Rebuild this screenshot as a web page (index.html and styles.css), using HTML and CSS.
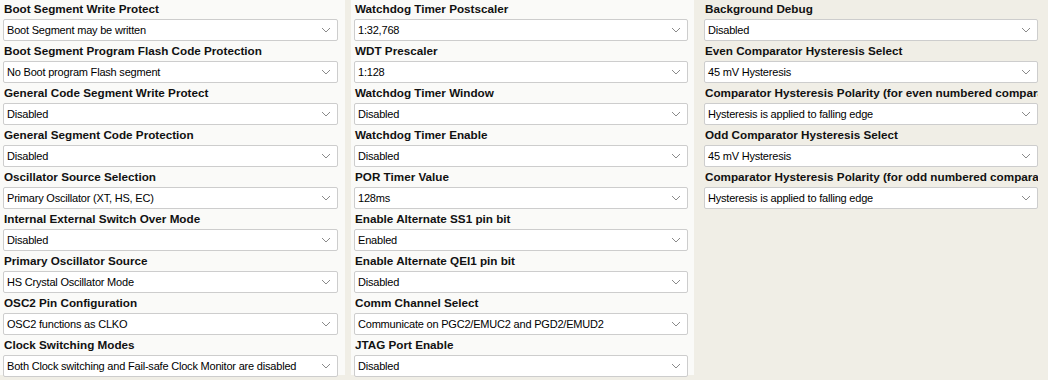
FILE: index.html
```html
<!DOCTYPE html>
<html lang="en">
<head>
  <meta charset="UTF-8" />
  <title>Configuration Bits</title>
  <link rel="stylesheet" href="styles.css">
</head>
<body>
  <div class="panel">

    <!-- column 1 -->
    <div class="col col-first">
      <div class="field">
        <div class="field-label">Boot Segment Write Protect</div>
        <div class="select"><span>Boot Segment may be written</span><svg class="chev" viewBox="0 0 10 6"><path d="M1 1l4 4 4-4"/></svg></div>
      </div>
      <div class="field">
        <div class="field-label">Boot Segment Program Flash Code Protection</div>
        <div class="select"><span>No Boot program Flash segment</span><svg class="chev" viewBox="0 0 10 6"><path d="M1 1l4 4 4-4"/></svg></div>
      </div>
      <div class="field">
        <div class="field-label">General Code Segment Write Protect</div>
        <div class="select"><span>Disabled</span><svg class="chev" viewBox="0 0 10 6"><path d="M1 1l4 4 4-4"/></svg></div>
      </div>
      <div class="field">
        <div class="field-label">General Segment Code Protection</div>
        <div class="select"><span>Disabled</span><svg class="chev" viewBox="0 0 10 6"><path d="M1 1l4 4 4-4"/></svg></div>
      </div>
      <div class="field">
        <div class="field-label">Oscillator Source Selection</div>
        <div class="select"><span>Primary Oscillator (XT, HS, EC)</span><svg class="chev" viewBox="0 0 10 6"><path d="M1 1l4 4 4-4"/></svg></div>
      </div>
      <div class="field">
        <div class="field-label">Internal External Switch Over Mode</div>
        <div class="select"><span>Disabled</span><svg class="chev" viewBox="0 0 10 6"><path d="M1 1l4 4 4-4"/></svg></div>
      </div>
      <div class="field">
        <div class="field-label">Primary Oscillator Source</div>
        <div class="select"><span>HS Crystal Oscillator Mode</span><svg class="chev" viewBox="0 0 10 6"><path d="M1 1l4 4 4-4"/></svg></div>
      </div>
      <div class="field">
        <div class="field-label">OSC2 Pin Configuration</div>
        <div class="select"><span>OSC2 functions as CLKO</span><svg class="chev" viewBox="0 0 10 6"><path d="M1 1l4 4 4-4"/></svg></div>
      </div>
      <div class="field">
        <div class="field-label">Clock Switching Modes</div>
        <div class="select"><span>Both Clock switching and Fail-safe Clock Monitor are disabled</span><svg class="chev" viewBox="0 0 10 6"><path d="M1 1l4 4 4-4"/></svg></div>
      </div>
    </div>

    <!-- column 2 -->
    <div class="col col-mid">
      <div class="field">
        <div class="field-label">Watchdog Timer Postscaler</div>
        <div class="select"><span>1:32,768</span><svg class="chev" viewBox="0 0 10 6"><path d="M1 1l4 4 4-4"/></svg></div>
      </div>
      <div class="field">
        <div class="field-label">WDT Prescaler</div>
        <div class="select"><span>1:128</span><svg class="chev" viewBox="0 0 10 6"><path d="M1 1l4 4 4-4"/></svg></div>
      </div>
      <div class="field">
        <div class="field-label">Watchdog Timer Window</div>
        <div class="select"><span>Disabled</span><svg class="chev" viewBox="0 0 10 6"><path d="M1 1l4 4 4-4"/></svg></div>
      </div>
      <div class="field">
        <div class="field-label">Watchdog Timer Enable</div>
        <div class="select"><span>Disabled</span><svg class="chev" viewBox="0 0 10 6"><path d="M1 1l4 4 4-4"/></svg></div>
      </div>
      <div class="field">
        <div class="field-label">POR Timer Value</div>
        <div class="select"><span>128ms</span><svg class="chev" viewBox="0 0 10 6"><path d="M1 1l4 4 4-4"/></svg></div>
      </div>
      <div class="field">
        <div class="field-label">Enable Alternate SS1 pin bit</div>
        <div class="select"><span>Enabled</span><svg class="chev" viewBox="0 0 10 6"><path d="M1 1l4 4 4-4"/></svg></div>
      </div>
      <div class="field">
        <div class="field-label">Enable Alternate QEI1 pin bit</div>
        <div class="select"><span>Disabled</span><svg class="chev" viewBox="0 0 10 6"><path d="M1 1l4 4 4-4"/></svg></div>
      </div>
      <div class="field">
        <div class="field-label">Comm Channel Select</div>
        <div class="select"><span>Communicate on PGC2/EMUC2 and PGD2/EMUD2</span><svg class="chev" viewBox="0 0 10 6"><path d="M1 1l4 4 4-4"/></svg></div>
      </div>
      <div class="field">
        <div class="field-label">JTAG Port Enable</div>
        <div class="select"><span>Disabled</span><svg class="chev" viewBox="0 0 10 6"><path d="M1 1l4 4 4-4"/></svg></div>
      </div>
    </div>

    <!-- column 3 -->
    <div class="col col-last">
      <div class="field">
        <div class="field-label">Background Debug</div>
        <div class="select"><span>Disabled</span><svg class="chev" viewBox="0 0 10 6"><path d="M1 1l4 4 4-4"/></svg></div>
      </div>
      <div class="field">
        <div class="field-label">Even Comparator Hysteresis Select</div>
        <div class="select"><span>45 mV Hysteresis</span><svg class="chev" viewBox="0 0 10 6"><path d="M1 1l4 4 4-4"/></svg></div>
      </div>
      <div class="field">
        <div class="field-label">Comparator Hysteresis Polarity (for even numbered comparators)</div>
        <div class="select"><span>Hysteresis is applied to falling edge</span><svg class="chev" viewBox="0 0 10 6"><path d="M1 1l4 4 4-4"/></svg></div>
      </div>
      <div class="field">
        <div class="field-label">Odd Comparator Hysteresis Select</div>
        <div class="select"><span>45 mV Hysteresis</span><svg class="chev" viewBox="0 0 10 6"><path d="M1 1l4 4 4-4"/></svg></div>
      </div>
      <div class="field">
        <div class="field-label">Comparator Hysteresis Polarity (for odd numbered comparators)</div>
        <div class="select"><span>Hysteresis is applied to falling edge</span><svg class="chev" viewBox="0 0 10 6"><path d="M1 1l4 4 4-4"/></svg></div>
      </div>
    </div>

  </div>
</body>
</html>
```

FILE: styles.css
```css
/* page */
* {
  box-sizing: border-box;
}
body {
  margin: 0;
  background: #f0eee6;
  font-family: "Liberation Sans", Arial, sans-serif;
  color: #000;
}

.panel {
  display: flex;
  height: 380px;
}

/* columns */
.col {
  flex: none;
}
.col-first {
  width: 345px;
  padding: 0 7px 0 3px;
  background: #fafaf8;
  height: 375px;
}
.col-mid {
  width: 343px;
  margin-left: 6px;
  padding: 0 6px 0 3px;
  background: #fafaf8;
  height: 375px;
}
.col-last {
  width: 354px;
  padding: 0 10px;
}

/* one config field: label + dropdown */
.field {
  height: 42px;
}
.field-label {
  height: 19px;
  padding: 0 14px 0 1px;
  font-size: 11.7px;
  font-weight: bold;
  line-height: 18px;
  color: #111;
  white-space: nowrap;
  overflow: hidden;
}
.select {
  display: flex;
  align-items: center;
  justify-content: space-between;
  height: 22px;
  padding: 0 6px 0 3px;
  background: #fff;
  border: 1px solid #cdcdcd;
  border-radius: 2px;
  font-size: 11px;
  letter-spacing: -0.2px;
  white-space: nowrap;
}
.chev {
  width: 10px;
  height: 6px;
  fill: none;
  stroke: #8a8a8a;
  stroke-width: 1;
}
```
